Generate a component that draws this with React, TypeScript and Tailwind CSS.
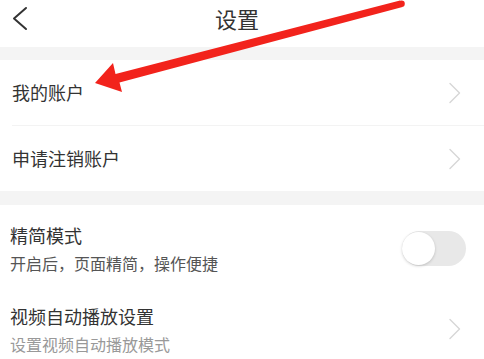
type Row = { title: string; sub?: string; toggle?: boolean };

function Chevron() {
    return (
        <svg width="14" height="22" viewBox="0 0 14 22">
            <path d="M2 1.5 L11.5 11 L2 20.5" fill="none" stroke="#d6d6d6" strokeWidth="1.4" strokeLinecap="round" strokeLinejoin="round" />
        </svg>
    );
}

function Toggle() {
    return (
        <div className="relative w-[64px] h-[35px] rounded-full bg-[#e8e8e8]">
            <div className="absolute left-0 top-[1px] w-[33px] h-[33px] rounded-full bg-white shadow-[0_1px_3px_rgba(0,0,0,0.18)]" />
        </div>
    );
}

export default function App() {
    const font = { fontFamily: '"Noto Sans CJK SC", "Noto Sans", sans-serif' };
    const detail: Row[] = [
        { title: '精简模式', sub: '开启后，页面精简，操作便捷', toggle: true },
        { title: '视频自动播放设置', sub: '设置视频自动播放模式' },
    ];

    return (
        <div className="relative w-[484px] h-[359px] overflow-hidden bg-white text-[#333]" style={font}>
            {/* header */}
            <div className="relative h-[47px] flex items-center justify-center">
                <svg className="absolute left-[10px] top-[5px]" width="22" height="28" viewBox="0 0 22 28">
                    <path d="M16 3 L4 13.5 L16 24" fill="none" stroke="#333" strokeWidth="2" strokeLinecap="round" strokeLinejoin="round" />
                </svg>
                <span className="text-[22px] leading-none -translate-x-[5px] -translate-y-[6px]">设置</span>
            </div>

            <div className="h-[13px] bg-[#f4f4f4]" />

            <div className="h-[65px] flex items-center justify-between pl-[12px] pr-[22px]">
                <span className="text-[18px]">我的账户</span>
                <Chevron />
            </div>
            <div className="ml-[12px] h-px bg-[#f3f3f3]" />
            <div className="h-[65px] flex items-center justify-between pl-[12px] pr-[22px]">
                <span className="text-[18px]">申请注销账户</span>
                <Chevron />
            </div>

            <div className="h-[14px] bg-[#f4f4f4]" />

            <div className="flex flex-col">
                {detail.map((r, i) => (
                    <div key={i} className={`flex items-center justify-between pl-[10px] ${i === 0 ? 'pt-[17px] pb-[15px] pr-[18px]' : 'pt-[14px] pr-[22px]'}`}>
                        <div className="flex flex-col">
                            <span className="text-[18px] leading-[26px]">{r.title}</span>
                            <span className={`text-[16px] leading-[22px] mt-[4px] ${i === 0 ? 'text-[#555]' : 'text-[#999]'}`}>{r.sub}</span>
                        </div>
                        {r.toggle ? <Toggle /> : <Chevron />}
                    </div>
                ))}
            </div>

            {/* red annotation arrow */}
            <svg className="absolute inset-0 pointer-events-none" width="484" height="359" viewBox="0 0 484 359">
                <polygon points="95,83 113,63 115.5,74 400,0.5 402.5,7 119.5,82.5 122,92" fill="#f2231c" />
                <circle cx="401.5" cy="3.8" r="3.3" fill="#f2231c" />
            </svg>
        </div>
    );
}
